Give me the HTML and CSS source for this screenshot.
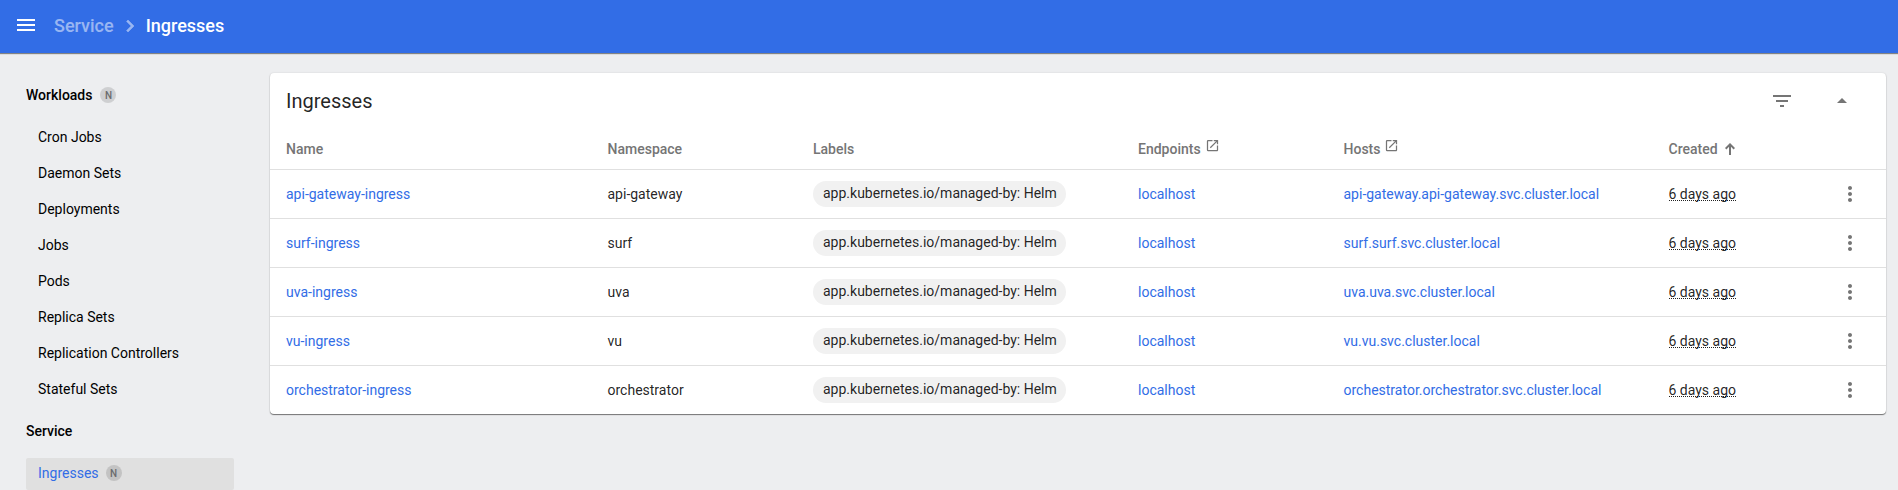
FILE: index.html
```
<!DOCTYPE html>
<html lang="en">
<head>
<meta charset="utf-8">
<title>Ingresses</title>
<link rel="stylesheet" href="styles.css">
</head>
<body>
<svg class="defs" width="0" height="0">
  <symbol id="more" viewBox="0 0 24 24"><path d="M12 8c1.1 0 2-.9 2-2s-.9-2-2-2-2 .9-2 2 .9 2 2 2zm0 2c-1.1 0-2 .9-2 2s.9 2 2 2 2-.9 2-2-.9-2-2-2zm0 6c-1.1 0-2 .9-2 2s.9 2 2 2 2-.9 2-2-.9-2-2-2z"/></symbol>
  <symbol id="open" viewBox="0 0 24 24"><path d="M19 19H5V5h7V3H5a2 2 0 0 0-2 2v14a2 2 0 0 0 2 2h14c1.100 0 2-.9 2-2v-7h-2v7zM14 3v2h3.590l-9.830 9.830 1.410 1.410L19 6.410V10h2V3h-7z"/></symbol>
</svg>
<header class="toolbar">
  <svg class="menu-icon" viewBox="0 0 24 24"><path d="M3 18h18v-2H3v2zm0-5h18v-2H3v2zm0-7v2h18V6H3z"/></svg>
  <nav class="breadcrumbs">
    <span class="crumb">Service</span>
    <svg class="chevron" viewBox="0 0 24 24"><path d="M10 6L8.590 7.410 13.170 12l-4.580 4.590L10 18l6-6z"/></svg>
    <span class="crumb current">Ingresses</span>
  </nav>
</header>
<div class="layout">
  <nav class="sidebar">
    <div class="group">Workloads <span class="badge">N</span></div>
    <div class="item">Cron Jobs</div>
    <div class="item">Daemon Sets</div>
    <div class="item">Deployments</div>
    <div class="item">Jobs</div>
    <div class="item">Pods</div>
    <div class="item">Replica Sets</div>
    <div class="item">Replication Controllers</div>
    <div class="item">Stateful Sets</div>
    <div class="group">Service</div>
    <div class="item active">Ingresses <span class="badge">N</span></div>
  </nav>
  <main class="card">
    <div class="card-header">
      <h1 class="title">Ingresses</h1>
      <svg class="icon filter" viewBox="0 0 24 24"><path d="M10 18h4v-2h-4v2zM3 6v2h18V6H3zm3 7h12v-2H6v2z"/></svg>
      <svg class="icon" viewBox="0 0 24 24"><path d="M7 14l5-5 5 5z"/></svg>
    </div>
    <div class="row head">
      <div>Name</div><div>Namespace</div><div>Labels</div>
      <div>Endpoints<svg class="open-icon"><use href="#open"/></svg></div>
      <div>Hosts<svg class="open-icon"><use href="#open"/></svg></div>
      <div class="sorted">Created<svg class="arrow" viewBox="0 0 10 12"><path d="M5 12V1.500M.7 5.700L5 1.400l4.300 4.300"/></svg></div>
      <div></div>
    </div>
    <div class="row">
      <div class="link">api-gateway-ingress</div><div>api-gateway</div>
      <div><span class="chip">app.kubernetes.io/managed-by: Helm</span></div>
      <div class="link">localhost</div><div class="link">api-gateway.api-gateway.svc.cluster.local</div>
      <div><span class="date">6 days ago</span></div><svg class="icon"><use href="#more"/></svg>
    </div>
    <div class="row">
      <div class="link">surf-ingress</div><div>surf</div>
      <div><span class="chip">app.kubernetes.io/managed-by: Helm</span></div>
      <div class="link">localhost</div><div class="link">surf.surf.svc.cluster.local</div>
      <div><span class="date">6 days ago</span></div><svg class="icon"><use href="#more"/></svg>
    </div>
    <div class="row">
      <div class="link">uva-ingress</div><div>uva</div>
      <div><span class="chip">app.kubernetes.io/managed-by: Helm</span></div>
      <div class="link">localhost</div><div class="link">uva.uva.svc.cluster.local</div>
      <div><span class="date">6 days ago</span></div><svg class="icon"><use href="#more"/></svg>
    </div>
    <div class="row">
      <div class="link">vu-ingress</div><div>vu</div>
      <div><span class="chip">app.kubernetes.io/managed-by: Helm</span></div>
      <div class="link">localhost</div><div class="link">vu.vu.svc.cluster.local</div>
      <div><span class="date">6 days ago</span></div><svg class="icon"><use href="#more"/></svg>
    </div>
    <div class="row">
      <div class="link">orchestrator-ingress</div><div>orchestrator</div>
      <div><span class="chip">app.kubernetes.io/managed-by: Helm</span></div>
      <div class="link">localhost</div><div class="link">orchestrator.orchestrator.svc.cluster.local</div>
      <div><span class="date">6 days ago</span></div><svg class="icon"><use href="#more"/></svg>
    </div>
  </main>
</div>
</body>
</html>
```
FILE: styles.css
```
* { box-sizing: border-box; }
body {
  margin: 0;
  height: 490px;
  overflow: hidden;
  display: flex;
  flex-direction: column;
  background: #edeef0;
  color: rgba(0, 0, 0, .87);
  font: 14px/20px Roboto, sans-serif;
}
.defs { display: none; }
.toolbar {
  flex: none;
  height: 53px;
  display: flex;
  align-items: center;
  padding: 0 14px 3px;
  background: #326de6;
  box-shadow: 0 1px 1px rgba(0, 0, 0, .45);
}
.menu-icon { width: 24px; height: 24px; fill: #fff; }
.breadcrumbs {
  display: flex;
  align-items: center;
  margin-left: 16px;
  padding-top: 2px;
  font-size: 18px;
  font-weight: 500;
  color: #fff;
}
.crumb:first-child, .chevron { opacity: .5; }
.chevron {
  width: 24px;
  height: 24px;
  margin: 0 4px;
  fill: #fff;
  stroke: #fff;
  stroke-width: .6;
}
.layout { flex: 1; min-height: 0; display: flex; align-items: flex-start; }
.sidebar { width: 234px; padding: 21px 0 0 26px; color: #000; }
.group, .item { display: flex; align-items: center; gap: 8px; }
.group { height: 42px; font-weight: 500; }
.item { height: 32px; margin: 0 0 4px; padding-left: 12px; border-radius: 2px; }
.group + .item { margin-top: 5px; }
.item + .group { height: 42px; margin-top: 5px; }
.item.active { gap: 7px; padding-bottom: 2px; background: #e0e0e0; color: #326de6; }
.group + .item.active { margin-top: 6px; }
.badge {
  width: 16px;
  height: 16px;
  border-radius: 50%;
  background: rgba(0, 0, 0, .13);
  color: #6b6b6e;
  font-size: 10px;
  font-weight: 500;
  line-height: 17px;
  text-align: center;
}
.card {
  width: 1616px;
  height: 341px;
  margin: 20px 0 0 36px;
  background: #fff;
  border-radius: 4px;
  box-shadow: 0 1px 1px rgba(0, 0, 0, .5), 0 0 2px rgba(0, 0, 0, .12);
}
.card-header {
  height: 56px;
  display: flex;
  align-items: center;
  padding: 0 32px 0 16px;
}
.title { flex: 1; margin: 0; font-size: 20px; line-height: 24px; font-weight: 400; }
.icon { width: 24px; height: 24px; fill: #757575; }
.filter { margin-right: 36px; }
.row {
  height: 49px;
  display: grid;
  grid-template-columns: 321.5px 205.5px 325px 205.5px 325px 169.5px 24px;
  align-items: center;
  padding-left: 16px;
  border-top: 1px solid #e0e0e0;
}
.row.head { height: 40px; border: 0; color: #757575; font-weight: 500; }
.link { color: #326de6; }
.chip {
  display: block;
  width: 253px;
  height: 26px;
  margin-bottom: 1px;
  padding: 2px 0 2px 10px;
  border-radius: 13px;
  background: #f1f1f1;
  white-space: nowrap;
}
.date { border-bottom: 1px dotted #222; line-height: 12px; display: inline-block; }
.open-icon { width: 15px; height: 15px; margin: -4px 0 0 4px; vertical-align: 1px; fill: #757575; }
.sorted { display: flex; align-items: center; }
.arrow {
  width: 10px;
  height: 12px;
  margin-left: 7px;
  fill: none;
  stroke: #757575;
  stroke-width: 2;
}
```
